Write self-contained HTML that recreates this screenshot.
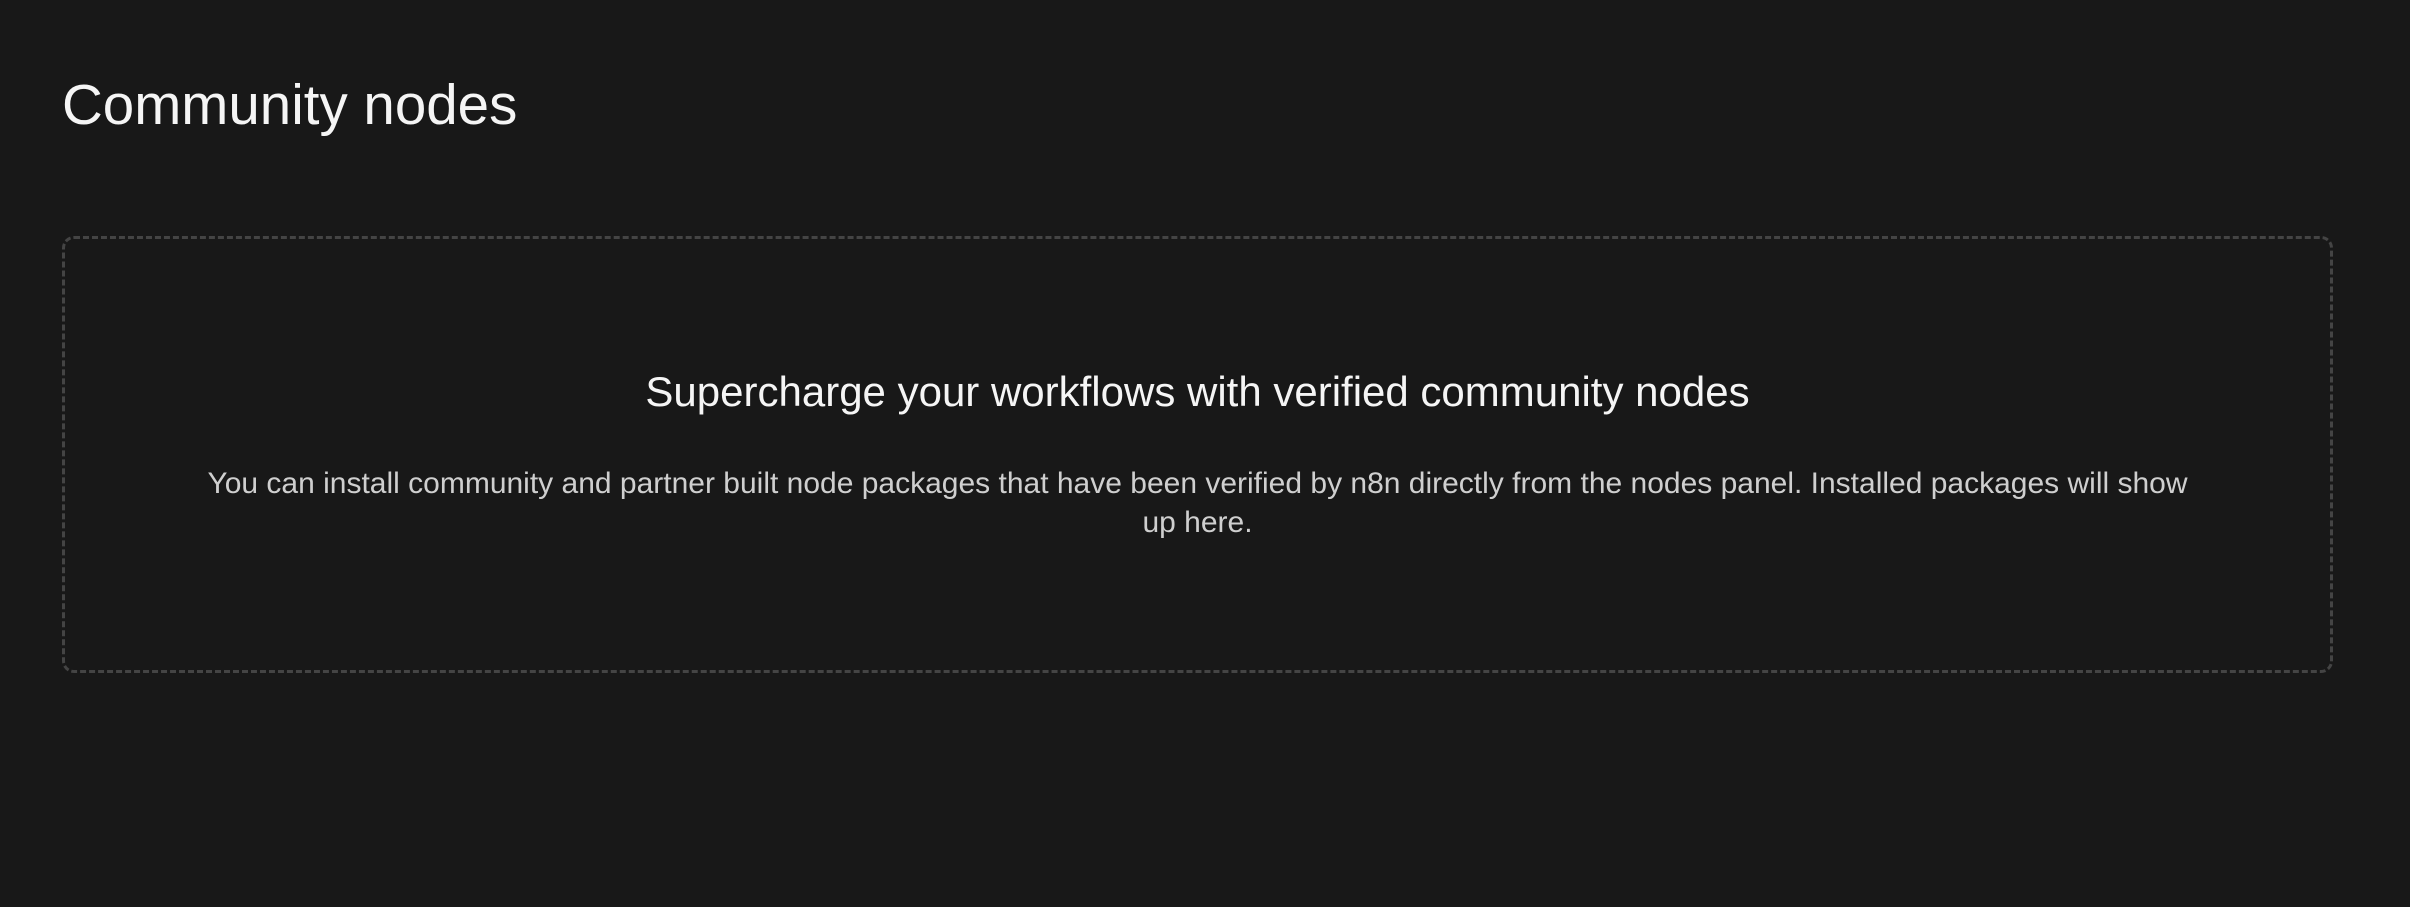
<!DOCTYPE html>
<html><head><style>
html,body{margin:0;padding:0;background:#181818;width:2410px;height:907px;overflow:hidden;font-family:"Liberation Sans",sans-serif;}
h1{position:absolute;left:62px;top:70px;margin:0;font-weight:400;font-size:56.5px;line-height:70px;color:#f5f5f5;}
.box{position:absolute;left:62px;top:236px;width:2271px;height:437px;border:3px dashed #444;border-radius:12px;box-sizing:border-box;}
h2{position:absolute;left:62px;width:2271px;top:366px;margin:0;text-align:center;font-weight:400;font-size:42px;line-height:52px;color:#f5f5f5;}
p{position:absolute;left:62px;width:2271px;top:464px;margin:0;text-align:center;font-size:30px;line-height:39px;color:#cfcfcf;}
</style></head><body>
<h1>Community nodes</h1>
<div class="box"></div>
<h2>Supercharge your workflows with verified community nodes</h2>
<p>You can install community and partner built node packages that have been verified by n8n directly from the nodes panel. Installed packages will show<br>up here.</p>
</body></html>
